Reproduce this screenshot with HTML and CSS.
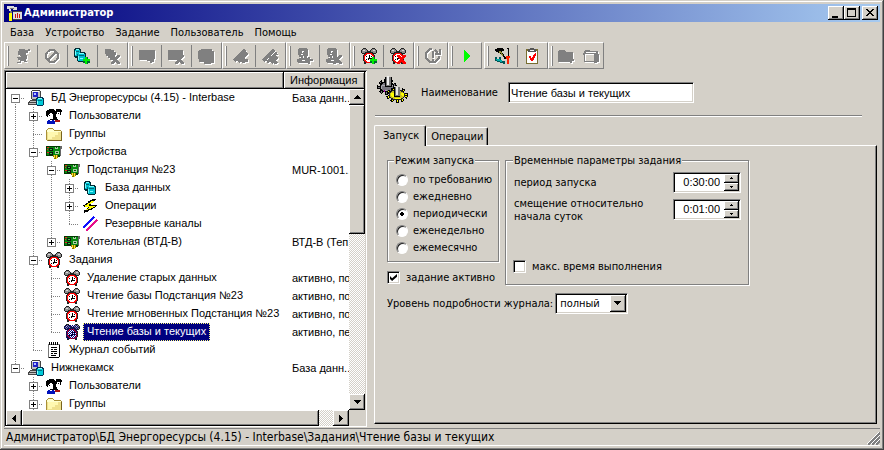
FILE: index.html
```html
<!DOCTYPE html>
<html lang="ru">
<head>
<meta charset="utf-8">
<title>Администратор</title>
<link rel="stylesheet" href="styles.css">
</head>
<body>
<svg class="defs" aria-hidden="true">
  <symbol id="clock" viewBox="0 0 16 16">
    <path fill="#222" d="M2 0h3v1h1v1h4V1h1V0h3v1h1v1h1v3h-1v1H1V5H0V2h1V1h1zM3 5h10v2h1v6h-1v3h-2v-1H5v1H3v-3H2V7h1z"/>
    <path fill="#909090" d="M2 1h3v1h1v2H4v1H1V2h1zM11 1h3v1h1v3h-3V4h-2V2h1z"/>
    <path fill="#d8d8d8" d="M2 2h2v1H2zM12 2h2v1h-2zM7 2h2v1H7z"/>
    <path fill="#f00" d="M5 5h6v1h1v1h1v6h-1v1h-1v1H5v-1H4v-1H3V7h1V6h1z"/>
    <path fill="#fff" d="M6 6h4v1h1v1h1v4h-1v1h-1v1H6v-1H5v-1H4V8h1V7h1z"/>
    <path fill="#000" d="M8 7h1v3h2v1H8v1H7v-2h1zM5 8h1v1H5zM5 11h1v1H5zM10 8h1v1h-1z"/>
  </symbol>
  <symbol id="clock-sel" viewBox="0 0 16 16">
    <use href="#clock"/>
    <path stroke="#00007f" stroke-dasharray="1 1" d="M2 1.5h12M1 2.5h14M0 3.5h16M1 4.5h14M2 5.5h12M3 6.5h10M2 7.5h12M3 8.5h10M2 9.5h12M3 10.5h10M2 11.5h12M3 12.5h10M2 13.5h12M3 14.5h10"/>
  </symbol>
  <symbol id="pc" viewBox="0 0 16 16">
    <path fill="#444" d="M4 0h8v1h1v8h-1v2h1v4H0v-3h1v-1h1v-1h2V9H3V1h1z"/>
    <path fill="#c0c0c0" d="M4 1h8v8H4zM2 11h9v1H2zM1 13h9v1H1z"/>
    <path fill="#fff" d="M4 1h7v1H4z"/>
    <path fill="#2222c8" d="M5 2h5v5H5z"/><path fill="#b4c4ff" d="M6 3h2v2H6z"/>
    <path fill="#035" d="M9 7h6v1h1v7h-1v1H9v-1H8V8h1z"/>
    <path fill="#00cbd8" d="M9 9h6v6H9z"/><path fill="#8ff" d="M10 8h4v1h-4zM9 11h1v3H9z"/>
    <path fill="#078" d="M10 10h4v1h-4z"/>
  </symbol>
  <symbol id="users" viewBox="0 0 16 16">
    <path fill="#000" d="M3 1h5v1h1v1h1V1h5v1h1v2h-1v3h-1v3h-2v2H4V9H1V8H0V3h1V2h2z"/>
    <path fill="#fff" d="M2 7h1V6h1V5h2v1h1v5H3v-1H2zM11 4h3v4h1v1h-1v2h-3V9h-1V6h1z"/>
    <path fill="#000" d="M3 7h1v1H3zM12 5h1v1h-1zM7 9h1v3H7z"/>
    <path fill="#01b" d="M1 13h1v-1h6v1h1v3H1z"/><path fill="#fff" d="M4 12h2v1H4z"/>
    <path fill="#a11" d="M9 12h5v2H9z"/>
  </symbol>
  <symbol id="folder" viewBox="0 0 16 16">
    <path fill="#a89038" d="M2 2h5v1h1v1h7v1h1v10H1v-1H0V4h1V3h1z"/>
    <path fill="#ffffcf" d="M2 3h5v1h1v1h7v1H1V4h1z"/>
    <path fill="#efe08c" d="M1 6h14v8H1z"/><path fill="#fff8b0" d="M2 6h10v3H9v2H6v2H2z"/>
    <path fill="#786420" d="M15 6h1v9H2v-1h13z"/>
  </symbol>
  <symbol id="board" viewBox="0 0 16 16">
    <path fill="#003c00" d="M0 2h14v1h1v8h-1v2H8v-1H0z"/>
    <path fill="#078a10" d="M1 3h13v8H1z"/>
    <path fill="#111" d="M3 4h4v3H3zM3 8h4v3H3z"/>
    <path fill="#e22" d="M1 3h2v1H1zM1 5h1v1H1zM1 8h2v1H1z"/>
    <path fill="#3c4" d="M4 5h2v1H4zM4 9h2v1H4z"/>
    <path fill="#a9d0a5" d="M9 3h3v2H9zM9 7h4v3H9z"/><path fill="#074607" d="M10 3h1v1h-1zM10 8h2v1h-2z"/>
    <path fill="#8a7500" d="M7 11h5v3h-1v1H8v-2H7z"/><path fill="#ffe428" d="M8 11h1v3H8zM10 11h1v4h-1z"/>
    <path fill="#666" d="M14 2h2v3h-1v7h-1z"/>
  </symbol>
  <symbol id="db" viewBox="0 0 16 16">
    <path fill="#002c35" d="M3 1h5v1h1v3h4v1h1v8h-1v1H6v-1H5v-3H3v-1H2V2h1z"/>
    <path fill="#00bfcf" d="M3 3h5v6H3zM6 7h7v7H6z"/>
    <path fill="#7ff" d="M4 2h3v1H4zM7 6h5v1H7zM3 4h1v4H3zM6 9h1v4H6zM8 11h3v1H8z"/>
    <path fill="#006878" d="M4 4h3v1H4zM7 8h5v1H7zM5 7h1v2H5z"/>
  </symbol>
  <symbol id="bolt" viewBox="0 0 16 16">
    <path fill="#000" d="M10 1h4v1h-1v1h-1v1h-1v1H9v2h6v1h-1v1h-1v1h-2v1h-1v1H7v1H6v1H3v1H2v-3h2v-1h1v-1h1v-1H2V8H1V7h2V6h1V5h2V3h2V2h2z"/>
    <path fill="#ff0" d="M9 3h3v1h-1v1H9v1H7v2h6v1h-2v1H9v1H6v1H4v-1h2v-1h1V9H3V7h2V6h1V5h2V4h1z"/>
  </symbol>
  <symbol id="lines" viewBox="0 0 16 16">
    <path stroke="#1010ff" stroke-width="2" d="M1 12 12 1"/><path stroke="#e6108c" stroke-width="2" d="M4 15 15 4"/>
  </symbol>
  <symbol id="note" viewBox="0 0 16 16">
    <path fill="#777" d="M2 2h12v13h-1v1H2z"/><path fill="#fff" d="M3 3h10v12H3z"/>
    <path fill="#000" d="M13 3h1v12h-1zM3 15h10v1H3zM3 0h1v3H3zM5 0h1v3H5zM7 0h1v3H7zM9 0h1v3H9zM11 0h1v3h-1zM5 5h6v1H5zM5 7h2v1H5zM8 7h3v1H8zM5 9h6v1H5zM5 11h2v1H5zM8 11h3v1H8zM5 13h5v1H5z"/>
  </symbol>
  <symbol id="plus" viewBox="0 0 16 16"><path fill="#063" d="M11 9h3v2h2v4h-2v1h-3v-1H9v-4h2z"/><path fill="#0e0" d="M11 9h2v2h3v2h-3v3h-2v-3H9v-2h2z"/></symbol>
  <symbol id="x" viewBox="0 0 16 16"><path fill="currentColor" d="M7 7h3v1h1v1h1V8h1V7h3v2h-1v1h-1v1h-1v1h1v1h1v1h1v2h-3v-1h-1v-1h-1v1h-1v1H7v-2h1v-1h1v-1h1v-1H9v-1H8V9H7z"/></symbol>
  <symbol id="person" viewBox="0 0 16 16"><path fill="#808080" fill-rule="evenodd" d="M2 0h8v1h1v7h-1v2h2v2h1v3H1v-1H0v-3h2v-1h2V9H2V7H1V1h1zM5 3v2h1V4h1V3zM4 6v1h2V6zM6 8v2h1V8zM5 12v1h3v-1z"/></symbol>
  <symbol id="gears" viewBox="0 0 32 28">
    <g fill="none">
      <ellipse cx="10" cy="11" rx="8" ry="6" stroke="#000" stroke-width="4" stroke-dasharray="3 2"/>
      <ellipse cx="10" cy="11" rx="8" ry="6" stroke="#77757e" stroke-width="2" stroke-dasharray="1 4" stroke-dashoffset="-1"/>
    </g>
    <ellipse cx="10" cy="11" rx="7" ry="5" fill="#77757e" stroke="#000"/>
    <path fill="#aaa9b0" d="M5 9h3v1H5v3H4v-3h1zM14 9h2v1h-2zM7 14h3v1H7z"/>
    <path fill="#000" d="M8 1h7v10H8z"/><path fill="#777" d="M9 1h5v9H9z"/><path fill="#eee" d="M10 0h2v9h-2z"/>
    <g fill="none">
      <ellipse cx="20" cy="19" rx="9" ry="6" stroke="#000" stroke-width="4" stroke-dasharray="3 2"/>
      <ellipse cx="20" cy="19" rx="9" ry="6" stroke="#ff0" stroke-width="2" stroke-dasharray="1 4" stroke-dashoffset="-1"/>
    </g>
    <ellipse cx="20" cy="19" rx="8" ry="5" fill="#c8c020" stroke="#222"/>
    <path fill="#ff0" d="M14 17h3v4h-2v-1h-1zM24 17h3v3h-2v-1h-1zM18 22h6v1h-6z"/>
    <path fill="#000" d="M17 12h6v9h-6z"/><path fill="#777" d="M18 11h5v9h-5z"/><path fill="#e8e8e8" d="M19 11h2v8h-2z"/><path fill="#a0a" d="M7 14h1v2H7z"/>
  </symbol>
</svg>
<div class="window">
  <header class="title">
    <svg class="i" viewBox="0 0 16 16"><path fill="#ddd" d="M1 1h7v1h3v3H7V4H5v2H3V4H1z"/><path fill="#777" d="M4 3h4v1H4zM4 6h2v2H4z"/><path fill="#ff0" d="M3 8h3v8H3z"/><path fill="#ddd" d="M7 6h9v9H7z"/><path fill="#444" d="M7 6h9v1H7zM7 14h9v1H7z"/><path fill="#c11" d="M9 9h1v4H9zM11 8h1v5h-1zM13 9h1v4h-1z"/></svg>
    <h1>Администратор</h1>
    <button class="wb" aria-label="Свернуть"><svg viewBox="0 0 12 10"><path d="M2 8h6v2H2z"/></svg></button>
    <button class="wb" aria-label="Развернуть"><svg viewBox="0 0 12 10"><path fill-rule="evenodd" d="M1 0h9v9H1zM2 2v6h7V2z"/></svg></button>
    <button class="wb close" aria-label="Закрыть"><svg viewBox="0 0 12 10"><path d="M2 1h2v1h1v1h2V2h1V1h2v1H9v1H8v1H7v1h1v1h1v1h1v1H8V7H7V6H5v1H4v1H2V7h1V6h1V5h1V4H4V3H3V2H2z"/></svg></button>
  </header>
  <nav class="menu"><button>База</button><button>Устройство</button><button>Задание</button><button>Пользователь</button><button>Помощь</button></nav>
  <div class="toolbar" role="toolbar" aria-label="Панель инструментов">
    <div class="band">
      <button disabled aria-label="Подключить"><svg class="i" viewBox="0 0 16 16"><path fill="#808080" d="M4 1h6v1h3V1h2v2h-2v2h-2v2h1v4h-1v2h1v1H9v-1H6v2H2v-1h3v-2H3v-2H2V9h4V8H5V7H3V3h1z"/></svg></button>
      <button disabled aria-label="Отключить"><svg class="i" viewBox="0 0 16 16"><g fill="none" stroke="#808080" stroke-width="2"><circle cx="8" cy="8" r="6"/><path d="m4 12 8-8"/></g></svg></button>
      <button aria-label="Добавить базу"><svg class="i" viewBox="0 0 16 16"><use href="#db" x="-2" y="-1"/><use href="#plus"/></svg></button>
      <button disabled aria-label="Удалить базу"><svg class="i" viewBox="0 0 16 16"><path fill="#808080" d="M1 1h6v1h3v2h2v3h-1v5H6v-2H4V8H2V6H1z"/><use href="#x"/></svg></button>
    </div>
    <div class="band">
      <button disabled aria-label="Добавить устройство"><svg class="i" viewBox="0 0 16 16"><path fill="#808080" d="M0 2h16v9h-1v3h-2v1h-2v-2H8v-1H0z"/></svg></button>
      <button disabled aria-label="Удалить устройство"><svg class="i" viewBox="0 0 16 16"><path fill="#808080" d="M0 2h15v7h-4v3H0z"/><use href="#x"/></svg></button>
      <button disabled aria-label="Свойства устройства"><svg class="i" viewBox="0 0 16 16"><path fill="#808080" d="M1 2h2V1h11v2h2v12h-3v1H6v-2H1v-3H0V3h1z"/></svg></button>
    </div>
    <div class="band">
      <button disabled aria-label="Добавить канал"><svg class="i" viewBox="0 0 16 16"><path stroke="#808080" stroke-width="3" d="M1 13 12 2M5 14l9-9M10 9v6M8 12h7"/></svg></button>
      <button disabled aria-label="Удалить канал"><svg class="i" viewBox="0 0 16 16"><path stroke="#808080" stroke-width="3" d="M1 13 12 2M5 14l10-9M8 9l7 7M9 15l6-6"/></svg></button>
    </div>
    <div class="band">
      <button disabled aria-label="Добавить пользователя"><svg class="i" viewBox="0 0 16 16"><use href="#person"/><path fill="#808080" d="M11 9h2v2h3v2h-3v3h-2v-3H9v-2h2z"/></svg></button>
      <button disabled aria-label="Удалить пользователя"><svg class="i" viewBox="0 0 16 16"><use href="#person"/><use href="#x"/></svg></button>
    </div>
    <div class="band">
      <button aria-label="Добавить задание"><svg class="i" viewBox="0 0 16 16"><use href="#clock"/><use href="#plus"/></svg></button>
      <button class="red" aria-label="Удалить задание"><svg class="i" viewBox="0 0 16 16"><use href="#clock"/><use href="#x"/></svg></button>
    </div>
    <div class="band">
      <button disabled aria-label="Обновить"><svg class="i" viewBox="0 0 16 16"><g fill="none" stroke="#808080" stroke-width="2"><path d="M7 1H5L1 5v5l4 4h5l4-4V8M10 2l3 3M15 1v5h-5M8 3v7M8 11v2"/></g></svg></button>
    </div>
    <div class="band">
      <button aria-label="Запустить"><svg class="i" viewBox="0 0 16 16"><path fill="#0f0" d="M5 2h1v1h1v1h1v1h1v1h1v1h1v2h-1v1H9v1H8v1H7v1H6v1H5z"/></svg></button>
    </div>
    <div class="band wide">
      <button aria-label="Настройки"><svg class="i" viewBox="0 0 16 16"><path fill="#000" d="M0 1h2V0h6v1h1v2H7v2h1v1h1v2h1v1h1v2H9V9H8V8H7V6H5V5H3V4H1V3H0zM12 0h2v9h-2z"/><path fill="#8a8a30" d="M4 3h2v1h1v2h1v2H7V7H6V5H4z"/><path fill="#ccc" d="M12 1h1v7h-1z"/><path fill="#055" d="M0 9h2v2h2V9h2v3h1v1h3v3H8v-1H5v-1H2v-1H0z"/><path fill="#0aa" d="M1 11h4v1h2v2H5v-1H2z"/><path fill="#f20" d="M11 8h4v2h-1v6h-2v-5h-1z"/></svg></button>
      <button aria-label="Проверка"><svg class="i" viewBox="0 0 16 16"><path fill="#786d30" d="M2 1h12v15H2z"/><path fill="#fff" d="M3 3h10v12H3z"/><path fill="#555" d="M6 0h4v1h2v3H4V1h2z"/><path fill="#eee" d="M6 2h4v1H6z"/><path fill="#f00" d="M11 5h1v3h-1v2h-1v2H9v1H7v-1H6v-2H5V8h2v2h1V9h1V7h1V6h1z"/></svg></button>
    </div>
    <div class="band small">
      <button disabled aria-label="Добавить группу"><svg class="i" viewBox="0 0 16 16"><path fill="#808080" d="M0 3h1V2h6v1h1v1h7v7h1v2h-2v2h-2v-1H0z"/></svg></button>
      <button disabled aria-label="Удалить группу"><svg class="i" viewBox="0 0 16 16"><path fill="#808080" fill-rule="evenodd" d="M1 3h1V2h5v1h8v3h1v8h-2v1h-3v-1H1V7H0V5h1zM3 4v1h10V4zM2 6v7h9V6z"/></svg></button>
    </div>
  </div>
  <main class="panes">
    <section class="tree">
      <div class="head"><span></span><span>Информация</span></div>
      <div class="view">
        <table>
          <tbody>
            <tr><td><div class="n"><i class="g first"></i><button class="ex" aria-label="Свернуть"></button><svg class="i"><use href="#pc"/></svg><span>БД Энергоресурсы (4.15) - Interbase</span></div></td><td>База данн...</td></tr>
            <tr><td><div class="n"><i class="g v"></i><i class="g t"></i><button class="ex p" aria-label="Развернуть"></button><svg class="i"><use href="#users"/></svg><span>Пользователи</span></div></td><td></td></tr>
            <tr><td><div class="n"><i class="g v"></i><i class="g t"></i><svg class="i"><use href="#folder"/></svg><span>Группы</span></div></td><td></td></tr>
            <tr><td><div class="n"><i class="g v"></i><i class="g t"></i><button class="ex" aria-label="Свернуть"></button><svg class="i"><use href="#board"/></svg><span>Устройства</span></div></td><td></td></tr>
            <tr><td><div class="n"><i class="g v"></i><i class="g v"></i><i class="g t"></i><button class="ex" aria-label="Свернуть"></button><svg class="i"><use href="#board"/></svg><span>Подстанция №23</span></div></td><td>MUR-1001...</td></tr>
            <tr><td><div class="n"><i class="g v"></i><i class="g v"></i><i class="g v"></i><i class="g t"></i><button class="ex p" aria-label="Развернуть"></button><svg class="i"><use href="#db"/></svg><span>База данных</span></div></td><td></td></tr>
            <tr><td><div class="n"><i class="g v"></i><i class="g v"></i><i class="g v"></i><i class="g t"></i><button class="ex p" aria-label="Развернуть"></button><svg class="i"><use href="#bolt"/></svg><span>Операции</span></div></td><td></td></tr>
            <tr><td><div class="n"><i class="g v"></i><i class="g v"></i><i class="g v"></i><i class="g l"></i><svg class="i"><use href="#lines"/></svg><span>Резервные каналы</span></div></td><td></td></tr>
            <tr><td><div class="n"><i class="g v"></i><i class="g v"></i><i class="g l"></i><button class="ex p" aria-label="Развернуть"></button><svg class="i"><use href="#board"/></svg><span>Котельная (ВТД-В)</span></div></td><td>ВТД-В (Теп...</td></tr>
            <tr><td><div class="n"><i class="g v"></i><i class="g t"></i><button class="ex" aria-label="Свернуть"></button><svg class="i"><use href="#clock"/></svg><span>Задания</span></div></td><td></td></tr>
            <tr><td><div class="n"><i class="g v"></i><i class="g v"></i><i class="g t"></i><svg class="i"><use href="#clock"/></svg><span>Удаление старых данных</span></div></td><td>активно, по...</td></tr>
            <tr><td><div class="n"><i class="g v"></i><i class="g v"></i><i class="g t"></i><svg class="i"><use href="#clock"/></svg><span>Чтение базы Подстанция №23</span></div></td><td>активно, по...</td></tr>
            <tr><td><div class="n"><i class="g v"></i><i class="g v"></i><i class="g t"></i><svg class="i"><use href="#clock"/></svg><span>Чтение мгновенных Подстанция №23</span></div></td><td>активно, по...</td></tr>
            <tr><td><div class="n"><i class="g v"></i><i class="g v"></i><i class="g l"></i><svg class="i"><use href="#clock-sel"/></svg><span class="sel">Чтение базы и текущих</span></div></td><td>активно, пе...</td></tr>
            <tr><td><div class="n"><i class="g v"></i><i class="g l"></i><svg class="i"><use href="#note"/></svg><span>Журнал событий</span></div></td><td></td></tr>
            <tr><td><div class="n"><i class="g l"></i><button class="ex" aria-label="Свернуть"></button><svg class="i"><use href="#pc"/></svg><span>Нижнекамск</span></div></td><td>База данн...</td></tr>
            <tr><td><div class="n"><i class="g"></i><i class="g t"></i><button class="ex p" aria-label="Развернуть"></button><svg class="i"><use href="#users"/></svg><span>Пользователи</span></div></td><td></td></tr>
            <tr><td><div class="n"><i class="g"></i><i class="g t"></i><button class="ex p" aria-label="Развернуть"></button><svg class="i"><use href="#folder"/></svg><span>Группы</span></div></td><td></td></tr>
          </tbody>
        </table>
      </div>
      <div class="bar vert"><button aria-label="Вверх"><svg viewBox="0 0 7 4"><path d="M3 0h1v1h1v1h1v1h1v1H0V3h1V2h1V1h1z"/></svg></button><div class="thumb"></div><div class="track"></div><button aria-label="Вниз"><svg viewBox="0 0 7 4"><path d="M0 0h7v1H6v1H5v1H4v1H3V3H2V2H1V1H0z"/></svg></button></div>
      <div class="bar horz"><button aria-label="Влево"><svg class="side" viewBox="0 0 4 7"><path d="M3 0h1v7H3V6H2V5H1V4H0V3h1V2h1V1h1z"/></svg></button><div class="thumb"></div><div class="track"></div><button aria-label="Вправо"><svg class="side" viewBox="0 0 4 7"><path d="M0 0h1v1h1v1h1v1h1v1H3v1H2v1H1v1H0z"/></svg></button></div>
    </section>
    <section class="detail">
      <div class="name"><svg class="gears"><use href="#gears"/></svg><label for="name">Наименование</label><input id="name" class="box" value="Чтение базы и текущих"></div>
      <div class="tabs" role="tablist"><button role="tab" aria-selected="true" class="on">Запуск</button><button role="tab" aria-selected="false">Операции</button></div>
      <form class="page">
        <div class="groups">
          <div>
            <fieldset class="mode">
              <legend>Режим запуска</legend>
              <label><input type="radio" name="mode">по требованию</label>
              <label><input type="radio" name="mode">ежедневно</label>
              <label><input type="radio" name="mode" checked>периодически</label>
              <label><input type="radio" name="mode">еженедельно</label>
              <label><input type="radio" name="mode">ежемесячно</label>
            </fieldset>
            <label class="check"><input type="checkbox" checked>задание активно</label>
          </div>
          <fieldset class="time">
            <legend>Временные параметры задания</legend>
            <div class="field"><label for="period">период запуска</label><div class="box spin"><input id="period" value="0:30:00"><div><button type="button" aria-label="Больше" class="up"></button><button type="button" aria-label="Меньше" class="down"></button></div></div></div>
            <div class="field"><label for="shift">смещение относительно<br>начала суток</label><div class="box spin"><input id="shift" value="0:01:00"><div><button type="button" aria-label="Больше" class="up"></button><button type="button" aria-label="Меньше" class="down"></button></div></div></div>
            <label class="check"><input type="checkbox">макс. время выполнения</label>
          </fieldset>
        </div>
        <div class="level"><label for="level">Уровень подробности журнала:</label><div class="box combo"><select id="level"><option>полный</option></select><svg viewBox="0 0 7 4"><path d="M0 0h7v1H6v1H5v1H4v1H3V3H2V2H1V1H0z"/></svg></div></div>
      </form>
    </section>
  </main>
  <footer class="status"><span>Администратор\БД Энергоресурсы (4.15) - Interbase\Задания\Чтение базы и текущих</span><svg viewBox="0 0 13 13"><path stroke="#808080" stroke-width="2" d="M1 13 13 1M5 13l8-8M9 13l4-4"/><path stroke="#fff" d="M0 12 12 0M4 12l9-9M8 12l5-5"/></svg></footer>
</div>
</body>
</html>
```

FILE: styles.css
```css
:root {
  --face: #d4d0c8;
  --shade: #808080;
  --ui: "DejaVu Sans Condensed", "DejaVu Sans", sans-serif;
  --list: "Liberation Sans", Arial, sans-serif;
}
* { box-sizing: border-box; }
body { margin: 0; background: var(--face); color: #000; font: 11px/13px var(--ui); }
button, input, select { font: inherit; color: inherit; margin: 0; padding: 0; border: 0; border-radius: 0; background: none; appearance: none; outline: 0; }
svg { display: block; flex: none; shape-rendering: crispEdges; }
.defs { position: absolute; width: 0; height: 0; }
.i { width: 16px; height: 16px; }

.window {
  display: flex; flex-direction: column; height: 100vh; min-height: 400px; padding: 4px;
  background: var(--face);
  box-shadow: inset -1px -1px #404040, inset 1px 1px var(--face), inset -2px -2px var(--shade), inset 2px 2px #fff;
}
.title { display: flex; align-items: center; height: 18px; padding: 0 2px; background: linear-gradient(90deg, #00007f, #a6caf0); }
.title h1 { flex: 1; margin: 0 2px; color: #fff; font-size: 11px; line-height: 16px; }
.wb, .bar button, .thumb, .spin button, .combo svg {
  background-color: var(--face);
  box-shadow: inset -1px -1px #000, inset 1px 1px #fff, inset -2px -2px var(--shade);
}
.wb { width: 16px; height: 14px; padding: 2px; }
.wb svg { width: 12px; height: 10px; }
.wb.close { margin-left: 2px; }

.menu { display: flex; height: 20px; }
.menu button { padding: 0 5px 0 6px; }

.toolbar { display: flex; height: 27px; }
.band { display: flex; padding-left: 4px; border: 1px solid; border-color: #fff var(--shade) var(--shade) #fff; background: linear-gradient(#fff, #fff) 2px 3px / 1px 20px no-repeat, linear-gradient(var(--shade), var(--shade)) 3px 3px / 1px 20px no-repeat; }
.band button { display: grid; place-items: center; width: 30px; }
.band button:first-child { width: 28px; }
.band button + button { background: linear-gradient(var(--shade), var(--shade)) 0 2px / 1px 22px no-repeat; }
.band.wide { margin-left: 2px; }
.band.small button { width: 25px; background: none; }
.band button:disabled svg { color: var(--shade); filter: drop-shadow(1px 1px 0 #fff); }
.red { color: #f00; }

.panes { flex: 1; min-height: 0; display: grid; grid-template-columns: 363fr 513fr; padding-top: 1px; }
.tree {
  display: grid; grid-template: 17px 1fr 16px / 1fr 16px; min-height: 0; padding: 2px 2px 1px;
  box-shadow: inset 1px 1px var(--shade), inset -1px -1px #fff, inset 2px 2px #000;
  font: 11px/13px var(--list);
}
.head { grid-column: 1 / 3; display: grid; grid-template-columns: 278px 1fr; border-bottom: 1px solid #000; background: var(--face); }
.head span { padding-left: 6px; line-height: 16px; box-shadow: inset -1px 0 #000, inset 1px 1px #fff, inset -2px -1px var(--shade); }
.view { overflow: hidden; background: #fff; }
.view table { border-collapse: collapse; table-layout: fixed; width: 378px; }
.view td { height: 18px; padding: 0; white-space: nowrap; }
.view td:first-child { width: 278px; }
.view td + td { padding-left: 8px; }
.n { display: flex; align-items: center; height: 18px; }
.n .i { margin: 0 3px 0 4px; }
.n span { padding: 2px 4px 3px; }
.n .sel { background: #00007f; color: #fff; outline: 1px dotted #ffff80; outline-offset: -1px; }
.g {
  --dv: repeating-linear-gradient(#808080 0 1px, transparent 1px 2px);
  --dh: repeating-linear-gradient(90deg, #808080 0 1px, transparent 1px 2px);
  width: 18px; height: 18px; background-repeat: no-repeat;
}
.v { background-image: var(--dv); background-size: 1px 18px; background-position: 9px 0; }
.t { background-image: var(--dv), var(--dh); background-size: 1px 18px, 9px 1px; background-position: 9px 0, 9px 9px; }
.l { background-image: var(--dv), var(--dh); background-size: 1px 9px, 9px 1px; background-position: 9px 0, 9px 9px; }
.first { background-image: var(--dv), var(--dh); background-size: 1px 9px, 9px 1px; background-position: 9px 9px, 9px 9px; }
.ex { flex: none; width: 9px; height: 9px; margin: 1px 4px 0 -13px; border: 1px solid var(--shade); background: linear-gradient(#000, #000) 1px 3px / 5px 1px no-repeat #fff; }
.ex.p { background: linear-gradient(#000, #000) 1px 3px / 5px 1px no-repeat, linear-gradient(#000, #000) 3px 1px / 1px 5px no-repeat #fff; }

.bar { display: flex; }
.vert { flex-direction: column; }
.bar button { display: grid; place-items: center; flex: none; width: 16px; height: 16px; }
.bar svg { width: 7px; height: 4px; }
.bar svg.side { width: 4px; height: 7px; }
.track { background: conic-gradient(#fff 25%, var(--face) 0 50%, #fff 0 75%, var(--face) 0) 0 0 / 2px 2px; }
.vert .thumb { flex: 129; }
.vert .track { flex: 160; }
.horz .thumb { flex: 297; }
.horz .track { flex: 14; }

.detail { display: flex; flex-direction: column; min-width: 0; padding: 0 3px 3px 7px; }
.name { display: flex; align-items: center; height: 46px; margin: 0 15px 0 1px; border-bottom: 1px solid var(--shade); box-shadow: 0 1px #fff; }
.gears { width: 32px; height: 28px; margin: 0 12px 6px 2px; }
.name label { width: 87px; }
.box { height: 21px; background: #fff; border: 1px solid; border-color: var(--shade) #fff #fff var(--shade); box-shadow: inset 1px 1px #000, inset -1px -1px var(--face); }
.name .box { width: 186px; padding: 0 2px; font-family: var(--list); }
.tabs { display: flex; align-items: flex-end; height: 20px; margin-top: 9px; }
.tabs button { height: 18px; padding: 0 4px; border: 1px solid; border-color: #fff #000 transparent #fff; border-bottom: 0; border-radius: 2px 2px 0 0; box-shadow: inset -1px 0 var(--shade); background: var(--face); }
.tabs .on { height: 21px; margin-bottom: -1px; padding: 0 6px 2px 8px; z-index: 1; }
.page { flex: 1; padding: 8px 12px; border: 1px solid; border-color: #fff #000 #000 #fff; box-shadow: inset -1px -1px var(--shade); }
.groups { display: flex; gap: 6px; }
fieldset { min-width: 0; margin: 0; border: 1px solid var(--shade); box-shadow: 1px 1px #fff, inset 1px 1px #fff; }
legend { padding: 0 1px; background: var(--face); white-space: nowrap; }
.mode { width: 112px; padding: 4px 6px 5px; }
.mode label { display: flex; align-items: center; height: 17px; white-space: nowrap; }
.time { width: 244px; padding: 5px 7px 11px; }
.field { display: flex; justify-content: space-between; align-items: center; height: 21px; margin-bottom: 6px; padding-left: 1px; white-space: nowrap; }
input[type="radio"] { width: 12px; height: 12px; margin: 0 5px 0 2px; border: 1px solid; border-color: var(--shade) #fff #fff var(--shade); border-radius: 50%; background: #fff; box-shadow: inset 1px 1px #202020; }
input[type="radio"]:checked { background: radial-gradient(circle, #000 2px, #fff 2px); }
.check { display: flex; align-items: center; height: 13px; white-space: nowrap; }
.groups > div .check { margin-top: 9px; }
.time .check { margin-top: 40px; }
input[type="checkbox"] { display: grid; place-items: center; width: 13px; height: 13px; margin-right: 6px; border: 1px solid; border-color: var(--shade) #fff #fff var(--shade); background: #fff; box-shadow: inset 1px 1px #000, inset -1px -1px var(--face); }
input[type="checkbox"]:checked::before { content: ""; width: 7px; height: 7px; background: #000; clip-path: polygon(0 30%, 30% 60%, 100% 0, 100% 40%, 30% 100%, 0 70%); }
.spin { display: flex; width: 68px; padding: 1px; }
.spin input { flex: 1; min-width: 0; padding-right: 4px; text-align: right; font-family: var(--list); }
.spin div { display: flex; flex-direction: column; width: 15px; }
.spin button { flex: 1; background-repeat: no-repeat; background-image: linear-gradient(#000, #000), linear-gradient(#000, #000); background-size: 3px 1px, 1px 1px; }
.spin .up { background-position: 6px 4px, 7px 3px; }
.spin .down { background-position: 6px 3px, 7px 4px; }
.level { display: flex; align-items: center; gap: 2px; margin-top: 8px; white-space: nowrap; }
.combo { position: relative; width: 73px; padding: 2px; }
.combo select { width: 100%; height: 100%; padding: 0 18px 0 2px; line-height: 15px; }
.combo svg { position: absolute; top: 1px; right: 1px; width: 16px; height: 17px; padding: 6px 5px 7px 4px; pointer-events: none; }

.status { display: flex; align-items: center; height: 18px; margin-top: 1px; padding-left: 2px; border-top: 1px solid var(--shade); border-bottom: 1px solid #fff; font-size: 12px; line-height: 15px; }
.status span { flex: 1; white-space: nowrap; }
.status svg { width: 13px; height: 13px; align-self: flex-end; }
```
